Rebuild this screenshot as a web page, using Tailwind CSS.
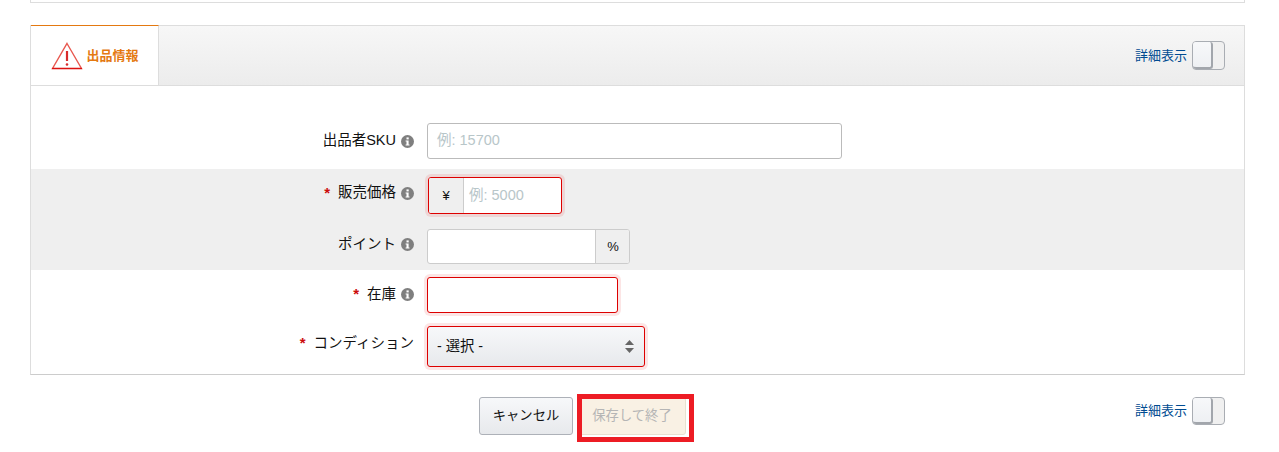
<!DOCTYPE html>
<html lang="ja">
<head>
    <meta charset="UTF-8">
    <title>出品情報</title>
    <script src="https://cdn.jsdelivr.net/npm/@tailwindcss/browser@4"></script>
</head>
<body class="bg-white text-[14.5px] text-[#111] font-['Liberation_Sans','Noto_Sans_CJK_JP',sans-serif] overflow-hidden">
    <div class="relative h-[452px] w-[1279px]">
        <!-- top card edge -->
        <div class="ml-[30px] h-[3px] w-[1215px] border-x border-b border-[#ddd]"></div>

        <!-- offer card -->
        <section class="ml-[30px] mt-[22px] h-[350px] w-[1215px] border border-[#ddd] border-b-[#ccc]">
            <header class="flex h-[60px] items-stretch justify-between border-b border-[#ddd] bg-gradient-to-b from-[#f7f7f7] to-[#ececec]">
                <div class="flex w-[128px] items-center justify-center gap-[3px] border-r border-[#ddd] border-t border-t-[#e47911] bg-white -mt-px pl-[1px]">
                    <svg class="w-[32px] h-[28px]" viewBox="0 0 32 28" fill="none">
                        <path d="M16 1.5 L30.5 26.5 L1.5 26.5 Z" stroke="#e8584f" stroke-width="1.4" stroke-linejoin="miter"/>
                        <path d="M1 26.5 H31" stroke="#dd1111" stroke-width="1.2"/>
                        <path d="M16 9 V19" stroke="#d92b2b" stroke-width="2.2"/>
                        <circle cx="16" cy="22.5" r="1.3" fill="#d92b2b"/>
                    </svg>
                    <span class="text-[13px] font-bold text-[#e47911]">出品情報</span>
                </div>
                <div class="flex items-center gap-[5px] pr-[19px]">
                    <span class="text-[13px] text-[#004b91]">詳細表示</span>
                    <div class="flex h-[29px] w-[33px] rounded-[4px] border border-[#a9adb3] bg-[#f0f0f0]">
                        <div class="h-full w-[20px] rounded-[3px] border-r-2 border-b-2 border-[#a2a6ac] bg-gradient-to-b from-[#f7f8fa] to-[#eef0f3]"></div>
                    </div>
                </div>
            </header>

            <div class="pt-[37px]">
                <div class="flex h-[46px] items-start">
                    <div class="flex h-[36px] w-[383px] items-center justify-end gap-[5px]">
                        <span>出品者SKU</span>
                        <svg class="w-[13px] h-[13px]" viewBox="0 0 13 13"><circle cx="6.5" cy="6.5" r="6.5" fill="#7f7f7f"/><rect x="5.5" y="2.4" width="2.2" height="2" fill="#fff"/><path d="M4.6 5.4H7.6V9.4H8.5V10.6H4.6V9.4H5.5V6.6H4.6Z" fill="#fff"/></svg>
                    </div>
                    <div class="ml-[13px] flex h-[36px] w-[415px] items-center rounded-[3px] border border-[#bbb] bg-white pl-[9px] text-[14.5px] text-[#b8c6c9]">例: 15700</div>
                </div>

                <div class="bg-[#efefef]">
                    <div class="flex h-[51px] items-start pt-[8px]">
                        <div class="flex h-[32px] w-[383px] items-center justify-end gap-[5px]">
                            <span class="font-bold text-[15px] text-[#cc0c0c] mr-[3px]">*</span>
                            <span>販売価格</span>
                            <svg class="w-[13px] h-[13px]" viewBox="0 0 13 13"><circle cx="6.5" cy="6.5" r="6.5" fill="#7f7f7f"/><rect x="5.5" y="2.4" width="2.2" height="2" fill="#fff"/><path d="M4.6 5.4H7.6V9.4H8.5V10.6H4.6V9.4H5.5V6.6H4.6Z" fill="#fff"/></svg>
                        </div>
                        <div class="ml-[14px] flex h-[37px] w-[134px] overflow-hidden rounded-[3px] border border-[#d00] bg-white shadow-[0_0_0_3px_rgba(221,0,0,0.1)]">
                            <div class="flex w-[35px] items-center justify-center border-r border-[#ccc] bg-[#efefef] text-[13px]">¥</div>
                            <div class="flex items-center pl-[5px] text-[14.5px] text-[#b8c6c9]">例: 5000</div>
                        </div>
                    </div>
                    <div class="flex h-[50px] items-start pt-[9px]">
                        <div class="flex h-[31px] w-[383px] items-center justify-end gap-[5px]">
                            <span>ポイント</span>
                            <svg class="w-[13px] h-[13px]" viewBox="0 0 13 13"><circle cx="6.5" cy="6.5" r="6.5" fill="#7f7f7f"/><rect x="5.5" y="2.4" width="2.2" height="2" fill="#fff"/><path d="M4.6 5.4H7.6V9.4H8.5V10.6H4.6V9.4H5.5V6.6H4.6Z" fill="#fff"/></svg>
                        </div>
                        <div class="ml-[13px] flex h-[35px] w-[203px] overflow-hidden rounded-[3px] border border-[#ccc] bg-white">
                            <div class="flex-1"></div>
                            <div class="flex w-[34px] items-center justify-center border-l border-[#ccc] bg-[#efefef] text-[13px] pl-[1px]">%</div>
                        </div>
                    </div>
                </div>

                <div class="flex h-[50px] items-start pt-[7px]">
                    <div class="flex h-[35px] w-[383px] items-center justify-end gap-[5px]">
                        <span class="font-bold text-[15px] text-[#cc0c0c] mr-[3px]">*</span>
                        <span>在庫</span>
                        <svg class="w-[13px] h-[13px]" viewBox="0 0 13 13"><circle cx="6.5" cy="6.5" r="6.5" fill="#7f7f7f"/><rect x="5.5" y="2.4" width="2.2" height="2" fill="#fff"/><path d="M4.6 5.4H7.6V9.4H8.5V10.6H4.6V9.4H5.5V6.6H4.6Z" fill="#fff"/></svg>
                    </div>
                    <div class="ml-[13px] h-[36px] w-[191px] rounded-[3px] border border-[#d00] bg-white shadow-[0_0_0_3px_rgba(221,0,0,0.1)]"></div>
                </div>

                <div class="flex items-start pt-[6px]">
                    <div class="flex h-[35px] w-[383px] items-center justify-end gap-[5px]">
                        <span class="font-bold text-[15px] text-[#cc0c0c] mr-[3px]">*</span>
                        <span>コンディション</span>
                    </div>
                    <div class="ml-[13px] flex h-[41px] w-[218px] items-center justify-between rounded-[3px] border border-[#d00] bg-gradient-to-b from-[#f7f8fa] to-[#e7e9ec] pl-[9px] pr-[10px] text-[14.3px] shadow-[0_0_0_3px_rgba(221,0,0,0.1)]">
                        <span>- 選択 -</span>
                        <svg class="w-[9px] h-[13px]" viewBox="0 0 9 13" fill="#666"><path d="M4.5 0 L9 5 H0Z"/><path d="M4.5 13 L9 8 H0Z"/></svg>
                    </div>
                </div>
            </div>
        </section>

        <!-- footer actions -->
        <div class="relative mt-[22px] ml-[479px] flex w-[770px] items-start text-[13.3px]">
            <div class="flex h-[38px] w-[94px] items-center justify-center rounded-[3px] border border-[#adb1b8] bg-gradient-to-b from-[#f7f8fa] to-[#e7e9ec] pb-[1px]">キャンセル</div>
            <div class="ml-[5px] flex h-[38px] w-[108px] items-center justify-center rounded-[3px] border border-[#e8e0d0] bg-[#f9f1e4] text-[#b5b5b5] pb-[1px]">保存して終了</div>
            <div class="ml-auto mr-[24px] flex items-center gap-[5px]">
                <span class="text-[13px] text-[#004b91]">詳細表示</span>
                <div class="flex h-[28px] w-[33px] rounded-[4px] border border-[#a9adb3] bg-[#f0f0f0]">
                    <div class="h-full w-[20px] rounded-[3px] border-r-2 border-b-2 border-[#a2a6ac] bg-gradient-to-b from-[#f7f8fa] to-[#eef0f3]"></div>
                </div>
            </div>
        </div>

        <!-- red highlight over the save button -->
        <div class="absolute left-[577px] top-[394px] h-[48px] w-[117px] border-[5px] border-[#ed1c24]"></div>
    </div>
</body>
</html>
